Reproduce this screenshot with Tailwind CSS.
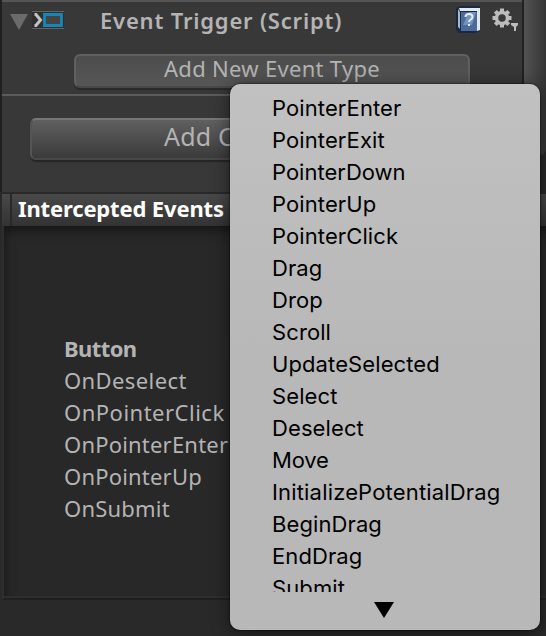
<!DOCTYPE html>
<html lang="en"><head><meta charset="utf-8"><title>Event Trigger</title>
<script src="https://cdn.jsdelivr.net/npm/@tailwindcss/browser@4"></script></head>
<body class="relative w-[546px] h-[636px] overflow-hidden bg-[#292929] font-['Noto_Sans','Open_Sans',sans-serif] text-[22px] text-[#b4b4b4]">
<div class="flex h-[192px] border-l-2 border-[#202020]">
  <main class="w-[520px] shrink-0 border-t-2 border-[#555] bg-[#383838]">
    <section class="h-[94px] border-b-2 border-[#5b5b5b]">
      <header class="flex h-[36px] items-center">
        <svg class="ml-2 mt-1 w-[18px] h-[16px] shrink-0" viewBox="0 0 18 16"><path d="M0 0H18L9 16Z" fill="#6b6b6b"/></svg>
        <svg class="ml-1 w-[32px] h-[18px] shrink-0" viewBox="0 0 32 18"><path fill="#303030" d="M0 0h32v18H0z"/><path stroke="#626262" d="M0 .5h32M0 17.500h32"/><path fill="none" stroke="#c4c4c4" stroke-width="3" d="M2.500 3.500h1.500L8.500 9 4 14.500H2.500"/><path fill="#444" stroke="#1688b8" stroke-width="2.800" d="M12.500 3.500h17v11h-17z"/></svg>
        <h1 class="ml-[36px] w-[356px] shrink-0 whitespace-nowrap font-semibold tracking-[0.8px]">Event Trigger (Script)</h1>
        <svg class="w-[26px] h-[28px] shrink-0" viewBox="0 0 26 28"><path fill="#192844" d="M0 2l4-2h20v25l-5 2H3l-3-3z"/><path fill="#e2e9ee" d="M3 2h21v22l-3 1V5H4z"/><path fill="#a4b8cc" d="M2 3l2 3v17l-2-2z"/><path fill="#4d6b9a" d="M5 6h16v19H5z"/><path fill="#7393bd" d="M13 6h7l-4 13H7z"/><path d="M9.500 11c0-4 7-4 7 0 0 3-3.500 2-3.500 5" fill="none" stroke="#e4edf6" stroke-width="2"/><path fill="#e4edf6" d="M12 18h2v2h-2z"/></svg>
        <svg class="ml-2 w-[29px] h-[28px] shrink-0" viewBox="0 0 29 28"><g fill="none" stroke="#bcbcbc"><circle cx="12" cy="12" r="5.500" stroke-width="3.500"/><path stroke-width="4" d="M12 2.500v3.500M12 18v3.500M2.500 12H6M18 12h3.500M5.300 5.300l2.400 2.400M16.300 16.300l2.400 2.400M5.300 18.700l2.400-2.400M16.300 7.700l2.400-2.400"/></g><path fill="#bcbcbc" d="M21 17h7v2l-2 2v4h-2v-4l-3-2z"/></svg>
      </header>
      <button class="ml-[72px] mt-4 flex h-[34px] w-[396px] items-center justify-center rounded-[6px] border-2 border-[#606060] border-b-[#484848] bg-linear-to-b from-[#4d4d4d] to-[#565656] pb-[5px] tracking-[0.3px] shadow-[0_2px_1px_#2a2a2a]">Add New Event Type</button>
    </section>
    <button class="ml-[28px] mt-[22px] flex h-[42px] w-[462px] items-center rounded-[6px] border-2 border-[#555] border-t-[#777] border-b-[#484848] bg-linear-to-b from-[#606060] to-[#3b3b3b] pb-[5px] pl-[132px] text-[25px] tracking-[0.2px] shadow-[0_2px_1px_#262626]">Add C</button>
  </main>
  <div class="h-[155px] w-6 rounded-b-[6px] border-l-2 border-[#222] bg-linear-to-r from-[#535353] to-[#353535]"></div>
</div>
<div class="flex h-[34px] border-l-2 border-t-2 border-[#292929] bg-linear-to-b from-[#494949] to-[#333]">
  <div class="w-[10px] border-r-2 border-[#292929]"></div><h2 class="ml-[6px] whitespace-nowrap leading-[29px] font-bold tracking-[-0.15px] text-white">Intercepted Events</h2>
</div>
<section class="ml-0.5 h-[374px] border-b-2 border-l-2 border-b-[#202020] border-l-[#2e2e2e] bg-[#282828] pl-[60px] pt-[106px] leading-[32px] shadow-[inset_0_-2px_0_#2e2e2e,inset_8px_12px_12px_-8px_#141414]">
  <h3 class="font-bold tracking-[-0.6px]">Button</h3>
  <ul class="tracking-[0.2px]"><li class="tracking-[0.4px]">OnDeselect</li><li class="tracking-[0.5px]">OnPointerClick</li><li>OnPointerEnter</li><li>OnPointerUp</li><li>OnSubmit</li></ul>
</section>
<div class="absolute left-[230px] top-[84px] h-[546px] w-[310px] rounded-[10px] bg-linear-to-b from-[#c1c1c1] to-[#b8b8b8] to-50% font-['Inter',sans-serif] text-[22px] tracking-[0.1px] text-black shadow-[0_2px_18px_#0008,0_0_2px_#000]">
  <ul class="h-[508px] overflow-hidden pl-[42px] pt-[8px] leading-[32px]">
    <li>PointerEnter</li><li>PointerExit</li><li class="tracking-normal">PointerDown</li><li>PointerUp</li><li>PointerClick</li><li>Drag</li><li>Drop</li><li>Scroll</li><li>UpdateSelected</li><li>Select</li><li>Deselect</li><li class="tracking-[-0.2px]">Move</li><li class="tracking-[0.17px]">InitializePotentialDrag</li><li>BeginDrag</li><li>EndDrag</li><li>Submit</li>
  </ul>
  <svg class="ml-[144px] mt-[10px] h-4 w-5" viewBox="0 0 20 16"><path d="M0 0h20L10 16Z"/></svg>
</div>
</body></html>
